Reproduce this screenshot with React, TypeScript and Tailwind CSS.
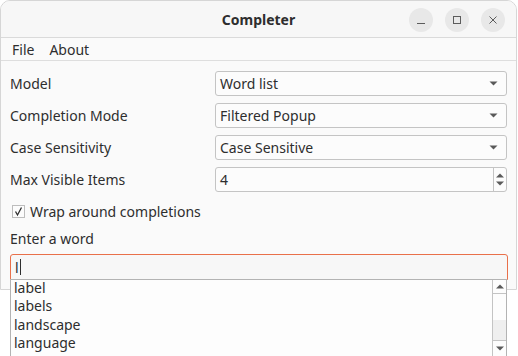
import React from "react";

const font = { fontFamily: '"Noto Sans", "Open Sans", sans-serif' };

function Caret() {
  return (
    <svg width="9" height="5" viewBox="0 0 9 5" className="text-[#5a5a5a]">
      <path d="M0.5 0.5 L8.5 0.5 L4.5 4.5 Z" fill="currentColor" />
    </svg>
  );
}

function Combo({ value }: { value: string }) {
  return (
    <div className="flex h-[25px] w-[292px] items-center justify-between rounded-[3px] border border-[#c4c4c4] bg-[#fcfcfc] pl-[4px] pr-[8px] text-[14px] text-[#2e2e2e]">
      <span>{value}</span>
      <Caret />
    </div>
  );
}

function Row({ label, children }: { label: string; children: React.ReactNode }) {
  return (
    <div className="flex h-[25px] items-center justify-between">
      <span className="text-[14px] text-[#2e2e2e]">{label}</span>
      {children}
    </div>
  );
}

function WinButton({ children }: { children: React.ReactNode }) {
  return (
    <div className="flex h-[24px] w-[24px] items-center justify-center rounded-full bg-[#e8e8e8] text-[#5c5c5c]">
      {children}
    </div>
  );
}

const words = ["label", "labels", "landscape", "language", "large"];

export default function App() {
  return (
    <div className="relative h-[356px] w-[518px] overflow-hidden bg-white" style={font}>
      <div className="flex h-[290px] w-[517px] flex-col overflow-hidden rounded-t-[10px] border border-[#d6d6d6] bg-[#fafafa]">
        {/* title bar */}
        <div className="relative flex h-[37px] shrink-0 items-center justify-center border-b border-[#dadada] bg-[#f7f7f7]">
          <span className="text-[14px] font-bold text-[#2e2e2e]">Completer</span>
          <div className="absolute right-[11px] top-[7px] flex gap-[12px]">
            <WinButton>
              <svg width="10" height="10" viewBox="0 0 10 10">
                <path d="M1 8.5 H9" stroke="currentColor" strokeWidth="1" />
              </svg>
            </WinButton>
            <WinButton>
              <svg width="10" height="10" viewBox="0 0 10 10">
                <rect x="1.5" y="1.5" width="7" height="7" fill="none" stroke="currentColor" strokeWidth="1" />
              </svg>
            </WinButton>
            <WinButton>
              <svg width="10" height="10" viewBox="0 0 10 10">
                <path d="M1.5 1.5 L8.5 8.5 M8.5 1.5 L1.5 8.5" stroke="currentColor" strokeWidth="1" />
              </svg>
            </WinButton>
          </div>
        </div>
        {/* menu bar */}
        <div className="flex h-[23px] shrink-0 items-center gap-[15px] border-b border-[#dedede] bg-[#fafafa] px-[11px] text-[14px] text-[#2e2e2e]">
          <span>File</span>
          <span>About</span>
        </div>
        {/* form */}
        <div className="flex flex-col px-[9px] pt-[10px]">
          <div className="flex flex-col gap-[7px]">
            <Row label="Model">
              <Combo value="Word list" />
            </Row>
            <Row label="Completion Mode">
              <Combo value="Filtered Popup" />
            </Row>
            <Row label="Case Sensitivity">
              <Combo value="Case Sensitive" />
            </Row>
            <Row label="Max Visible Items">
              <div className="flex h-[25px] w-[292px] items-stretch rounded-[3px] border border-[#c4c4c4] bg-[#fcfcfc] text-[14px] text-[#2e2e2e]">
                <span className="flex flex-1 items-center pl-[4px]">4</span>
                <div className="flex w-[13px] flex-col items-center justify-center gap-[3px] border-l border-[#c4c4c4] text-[#5a5a5a]">
                  <svg width="8" height="5" viewBox="0 0 8 5">
                    <path d="M0 4.5 L8 4.5 L4 0.5 Z" fill="currentColor" />
                  </svg>
                  <svg width="8" height="5" viewBox="0 0 8 5">
                    <path d="M0 0.5 L8 0.5 L4 4.5 Z" fill="currentColor" />
                  </svg>
                </div>
              </div>
            </Row>
          </div>
          <div className="mt-[9px] flex items-center gap-[5px] pl-[2px] text-[14px] text-[#2e2e2e]">
            <div className="flex h-[13px] w-[13px] items-center justify-center border border-[#bdbdbd] bg-[#fcfcfc]">
              <svg width="11" height="11" viewBox="0 0 11 11">
                <path d="M2.5 5.5 L4.5 9 L8.5 1.5" fill="none" stroke="#2e2e2e" strokeWidth="1.3" />
              </svg>
            </div>
            <span>Wrap around completions</span>
          </div>
          <div className="mt-[6px] text-[14px] text-[#2e2e2e]">Enter a word</div>
          <div className="mt-[5px] flex h-[26px] w-[498px] items-center rounded-t-[3px] border border-[#e9704a] bg-[#f7f7f7] pl-[4px] text-[14px] text-[#2e2e2e]">
            <span>l</span>
            <span className="ml-[1px] h-[16px] w-[1px] bg-[#2e2e2e]" />
          </div>
        </div>
      </div>
      {/* completion popup */}
      <div className="absolute left-[10px] top-[279px] flex h-[90px] w-[497px] border border-[#b3b3b3] bg-[#fdfdfd]">
        <div className="-mt-[1px] flex flex-1 flex-col pl-[3px] text-[14px] leading-[18.4px] text-[#2e2e2e]">
          {words.map((w) => (
            <span key={w}>{w}</span>
          ))}
        </div>
        <div className="flex h-[76px] w-[14px] flex-col border-l border-[#c4c4c4] text-[#5a5a5a]">
          <div className="flex h-[14px] items-center justify-center border-b border-[#c4c4c4]">
            <svg width="8" height="5" viewBox="0 0 8 5">
              <path d="M0 4.5 L8 4.5 L4 0.5 Z" fill="currentColor" />
            </svg>
          </div>
          <div className="h-[26px]" />
          <div className="h-[21px] border-b border-[#c4c4c4] bg-[#efefef]" />
          <div className="flex flex-1 items-center justify-center">
            <svg width="8" height="5" viewBox="0 0 8 5">
              <path d="M0 0.5 L8 0.5 L4 4.5 Z" fill="currentColor" />
            </svg>
          </div>
        </div>
      </div>
    </div>
  );
}
